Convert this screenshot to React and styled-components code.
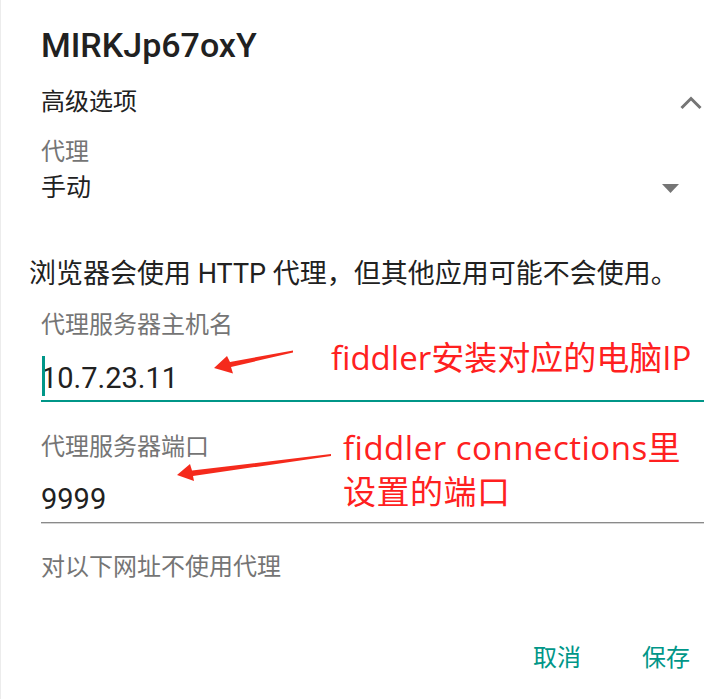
import React from "react";
import styled, { createGlobalStyle } from "styled-components";

const GlobalStyle = createGlobalStyle`
  html, body { margin: 0; padding: 0; background: #ffffff; }
  body { font-family: Roboto, "Noto Sans CJK SC", sans-serif; }
  * { box-sizing: border-box; }
`;

const Page = styled.div`
  position: relative;
  width: 728px;
  height: 699px;
  overflow: hidden;
  background: #ffffff;
  border-left: 1px solid #ececec;
`;

const Dialog = styled.div`
  display: flex;
  flex-direction: column;
  padding: 25px 24px 0 40px;
`;

const Title = styled.h1`
  margin: 0;
  font-size: 34px;
  line-height: 40px;
  font-weight: 500;
  color: #212121;
`;

const Row = styled.div`
  display: flex;
  align-items: center;
  justify-content: space-between;
  height: ${(p) => p.$h}px;
  margin-top: ${(p) => p.$mt}px;
`;

const RowText = styled.span`
  font-size: ${(p) => p.$size || 24}px;
  line-height: ${(p) => p.$h}px;
  color: #212121;
`;

const Label = styled.div`
  margin-top: ${(p) => p.$mt}px;
  font-size: 24px;
  line-height: 30px;
  color: #757575;
`;

const Sentence = styled.p`
  margin: ${(p) => p.$mt}px 0 0 -12px;
  font-size: 27px;
  line-height: 36px;
  color: #212121;
  white-space: nowrap;
`;

const Field = styled.div`
  position: relative;
  margin-top: ${(p) => p.$mt}px;
  padding: 2px 0 ${(p) => (p.$focused ? 2 : 3)}px;
  border-bottom: ${(p) => (p.$focused ? "2px solid #009688" : "1px solid #8a8a8a")};
  box-shadow: ${(p) => (p.$focused ? "none" : "0 1px 0 #d4d4d4")};
`;

const FieldValue = styled.div`
  font-size: 29px;
  line-height: 40px;
  color: #212121;
`;

const Caret = styled.span`
  position: absolute;
  left: 1px;
  top: 0;
  width: 3px;
  height: 40px;
  background: #009688;
`;

const Chevron = styled.svg`
  margin-right: 2px;
  flex: none;
`;

const Triangle = styled.svg`
  margin-right: 25px;
  flex: none;
`;

const ButtonRow = styled.div`
  display: flex;
  justify-content: flex-end;
  gap: 61px;
  margin-top: 61px;
  padding-right: 14px;
`;

const TextButton = styled.button`
  border: none;
  background: none;
  padding: 0;
  font-family: inherit;
  font-size: 24px;
  line-height: 30px;
  color: #009688;
`;

const Note = styled.div`
  position: absolute;
  left: ${(p) => p.$x}px;
  top: ${(p) => p.$y}px;
  font-family: "Open Sans", "Noto Sans CJK SC", sans-serif;
  font-size: 33px;
  line-height: 44px;
  letter-spacing: ${(p) => p.$ls || 0}px;
  color: #ff2020;
  white-space: nowrap;
`;

const ArrowLayer = styled.svg`
  position: absolute;
  left: 0;
  top: 0;
  pointer-events: none;
`;

export default function App() {
  return (
    <>
      <GlobalStyle />
      <Page>
        <Dialog>
          <Title>MIRKJp67oxY</Title>
          <Row $h={40} $mt={17}>
            <RowText $h={40}>高级选项</RowText>
            <Chevron width="22" height="16" viewBox="0 0 22 16">
              <polyline points="1.5,14 11,4.5 20.5,14" fill="none" stroke="#757575" strokeWidth="3" />
            </Chevron>
          </Row>
          <Label $mt={15}>代理</Label>
          <Row $h={36} $mt={3}>
            <RowText $h={36} $size={25}>手动</RowText>
            <Triangle width="17" height="9" viewBox="0 0 17 9">
              <polygon points="0,0 17,0 8.5,9" fill="#757575" />
            </Triangle>
          </Row>
          <Sentence $mt={50}>浏览器会使用 HTTP 代理，但其他应用可能不会使用。</Sentence>
          <Label $mt={18}>代理服务器主机名</Label>
          <Field $mt={16} $focused>
            <Caret />
            <FieldValue>10.7.23.11</FieldValue>
          </Field>
          <Label $mt={30}>代理服务器端口</Label>
          <Field $mt={15}>
            <FieldValue>9999</FieldValue>
          </Field>
          <Label $mt={29}>对以下网址不使用代理</Label>
          <ButtonRow>
            <TextButton>取消</TextButton>
            <TextButton>保存</TextButton>
          </ButtonRow>
        </Dialog>

        <Note $x={330} $y={336}>fiddler安装对应的电脑IP</Note>
        <Note $x={342} $y={426} $ls={0.5}>
          fiddler connections里
          <br />
          设置的端口
        </Note>

        <ArrowLayer width="728" height="699" viewBox="0 0 728 699">
          <polygon
            points="292,350.5 229,362 226,356 213,368 232,373.5 230,367 292,352.5"
            fill="#f52a1c"
          />
          <polygon
            points="330,454 191,470.5 189,464 176,475 193,481 192,476 330,456"
            fill="#f52a1c"
          />
        </ArrowLayer>
      </Page>
    </>
  );
}
